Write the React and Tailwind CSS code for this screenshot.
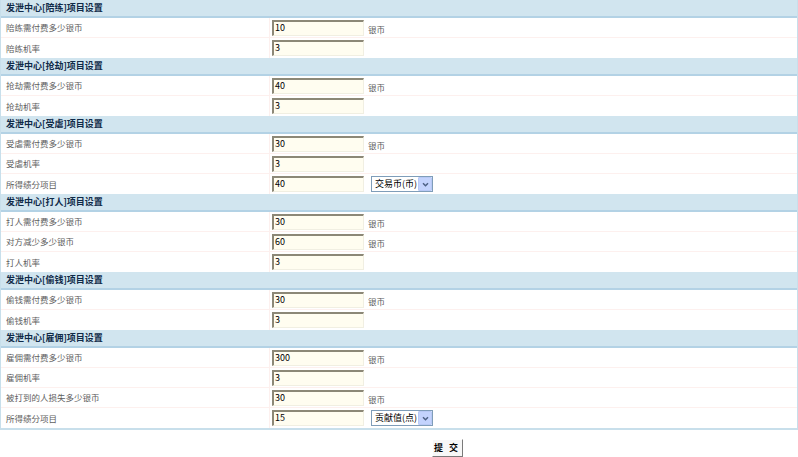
import React from "react";

const sections = [
  {
    title: "发泄中心[陪练]项目设置",
    rows: [
      { label: "陪练需付费多少银币", value: "10", unit: "银币" },
      { label: "陪练机率", value: "3" },
    ],
  },
  {
    title: "发泄中心[抢劫]项目设置",
    rows: [
      { label: "抢劫需付费多少银币", value: "40", unit: "银币" },
      { label: "抢劫机率", value: "3" },
    ],
  },
  {
    title: "发泄中心[受虐]项目设置",
    rows: [
      { label: "受虐需付费多少银币", value: "30", unit: "银币" },
      { label: "受虐机率", value: "3" },
      { label: "所得绩分项目", value: "40", select: "交易币(币)" },
    ],
  },
  {
    title: "发泄中心[打人]项目设置",
    rows: [
      { label: "打人需付费多少银币", value: "30", unit: "银币" },
      { label: "对方减少多少银币", value: "60", unit: "银币" },
      { label: "打人机率", value: "3" },
    ],
  },
  {
    title: "发泄中心[偷钱]项目设置",
    rows: [
      { label: "偷钱需付费多少银币", value: "30", unit: "银币" },
      { label: "偷钱机率", value: "3" },
    ],
  },
  {
    title: "发泄中心[雇佣]项目设置",
    rows: [
      { label: "雇佣需付费多少银币", value: "300", unit: "银币" },
      { label: "雇佣机率", value: "3" },
      { label: "被打到的人损失多少银币", value: "30", unit: "银币" },
      { label: "所得绩分项目", value: "15", select: "贡献值(点)" },
    ],
  },
];

function Input({ value }) {
  return (
    <div className="w-[92px] h-[16px] bg-[#fffdf0] border-t-2 border-l-2 border-r border-b border-t-[#8c8877] border-l-[#8c8877] border-r-[#f1efe2] border-b-[#f1efe2] text-[9px] leading-[12px] text-black pl-[1px]">
      {value}
    </div>
  );
}

function Select({ text }) {
  return (
    <div className="ml-[7px] h-[16px] flex items-center border border-[#7f9db9] bg-white">
      <span className="pl-[3px] pr-[1px] text-[9px] leading-[14px] text-black">{text}</span>
      <span className="w-[14px] h-[14px] bg-[#c3d3fd] border border-[#b8c9f5] flex items-center justify-center rounded-[1px]">
        <svg width="7" height="5" viewBox="0 0 8 6">
          <path d="M1 1.5 L4 4.5 L7 1.5" stroke="#4d6185" strokeWidth="1.8" fill="none" />
        </svg>
      </span>
    </div>
  );
}

export default function App() {
  return (
    <div
      className="w-[798px] h-[457px] bg-white"
      style={{ fontFamily: '"Noto Sans CJK SC", "Liberation Sans", sans-serif' }}
    >
      <div className="border-l border-r border-b-2 border-[#c8dfeb]">
        {sections.map((s, i) => (
          <div key={i}>
            <div className="h-[18px] bg-[#d1e5ef] border-b-2 border-[#b3d2e5] flex items-center pl-[5px] text-[9px] font-bold text-[#0f2a48] leading-[14px]">
              {s.title}
            </div>
            {s.rows.map((r, j) => (
              <div
                key={j}
                className={`h-[20px] flex ${j < s.rows.length - 1 ? "border-b border-[#fdf0ee]" : ""}`}
              >
                <div className="w-[269px] flex items-center pl-[5px] text-[8.5px] text-[#606060] border-r border-[#fdf0ee]">
                  {r.label}
                </div>
                <div className="flex-1 flex items-center pl-[2px]">
                  <Input value={r.value} />
                  {r.unit && (
                    <span className="ml-[4px] text-[8.5px] text-[#606060] mt-[4px]">{r.unit}</span>
                  )}
                  {r.select && <Select text={r.select} />}
                </div>
              </div>
            ))}
          </div>
        ))}
      </div>
      <div className="flex justify-center pt-[9px] pl-[96px]">
        <button className="h-[18px] w-[31px] bg-[#f7f7f7] border border-t-white border-l-white border-r-[#7a7a7a] border-b-[#7a7a7a] text-[9px] leading-[14px] text-black font-bold tracking-[2px]">
          提 交
        </button>
      </div>
    </div>
  );
}
